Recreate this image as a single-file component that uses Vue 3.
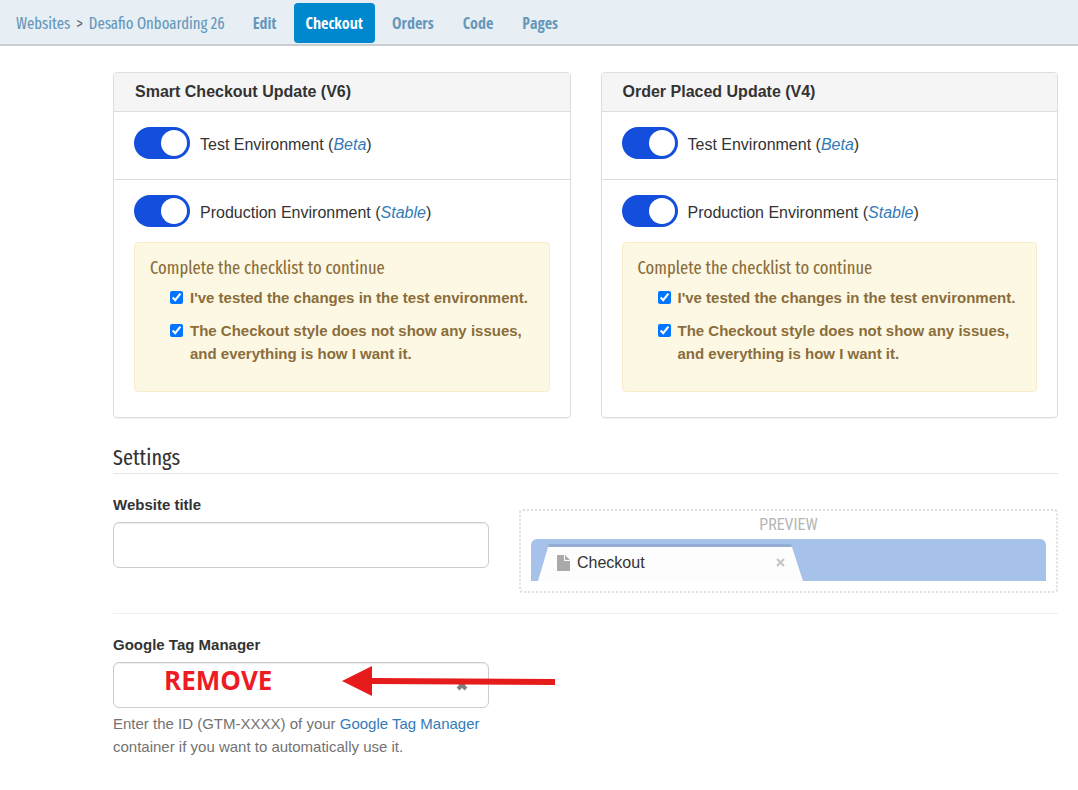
<script setup>
import { ref } from 'vue'

const tabs = ['Edit', 'Checkout', 'Orders', 'Code', 'Pages']
const activeTab = ref('Checkout')

const panels = ref([
  { id: 'smart', title: 'Smart Checkout Update (V6)', test: true, production: true, tested: true, styled: true },
  { id: 'order', title: 'Order Placed Update (V4)', test: true, production: true, tested: true, styled: true }
])

const title = ref('')
const gtm = ref('')
</script>

<template>
  <div class="page">
    <nav class="topbar">
      <div class="crumbs">
        <a href="#">Websites</a>
        <span class="sep">&gt;</span>
        <a href="#">Desafio Onboarding 26</a>
      </div>
      <div class="tabs">
        <a
          v-for="tab in tabs"
          :key="tab"
          href="#"
          class="tab"
          :class="{ active: tab === activeTab }"
          @click.prevent="activeTab = tab"
        >{{ tab }}</a>
      </div>
    </nav>

    <main class="content">
      <div class="panels">
        <section v-for="panel in panels" :key="panel.id" class="panel">
          <h3 class="panel-title">{{ panel.title }}</h3>
          <div class="row">
            <div class="env">
              <input :id="panel.id + '-test'" v-model="panel.test" type="checkbox" class="switch" />
              <label :for="panel.id + '-test'">Test Environment (<em>Beta</em>)</label>
            </div>
          </div>
          <div class="row">
            <div class="env">
              <input :id="panel.id + '-prod'" v-model="panel.production" type="checkbox" class="switch" />
              <label :for="panel.id + '-prod'">Production Environment (<em>Stable</em>)</label>
            </div>
            <div class="checklist">
              <h4>Complete the checklist to continue</h4>
              <label class="check">
                <input v-model="panel.tested" type="checkbox" />
                <span>I've tested the changes in the test environment.</span>
              </label>
              <label class="check">
                <input v-model="panel.styled" type="checkbox" />
                <span>The Checkout style does not show any issues, and everything is how I want it.</span>
              </label>
            </div>
          </div>
        </section>
      </div>

      <h2 class="section-title">Settings</h2>

      <div class="settings">
        <div class="field">
          <label for="title">Website title</label>
          <input id="title" v-model="title" type="text" class="text-input" />
        </div>
        <div class="preview">
          <div class="preview-label">PREVIEW</div>
          <div class="browser">
            <div class="browser-tab">
              <svg class="file" width="13" height="16" viewBox="0 0 13 16" aria-hidden="true">
                <path d="M0 0h7v6h6v10H0z" fill="#aaa" />
                <path d="M8 0l5 5H8z" fill="#aaa" />
              </svg>
              <span class="browser-title">Checkout</span>
              <svg class="close" width="9" height="9" viewBox="0 0 9 9" aria-hidden="true">
                <path d="M1 1l7 7M8 1l-7 7" stroke="#c4c4c4" stroke-width="2" />
              </svg>
            </div>
          </div>
        </div>
      </div>

      <hr class="divider" />

      <div class="settings">
        <div class="field">
          <label for="gtm">Google Tag Manager</label>
          <div class="gtm">
            <input id="gtm" v-model="gtm" type="text" class="text-input" />
            <button type="button" class="clear" aria-label="Clear" @click="gtm = ''">
              <svg width="14" height="14" viewBox="0 0 14 14">
                <path d="M3 3l8 8M11 3L3 11" stroke="#808080" stroke-width="4" />
              </svg>
            </button>
            <span class="note">REMOVE</span>
            <svg class="arrow" width="213" height="30" viewBox="0 0 213 30" aria-hidden="true">
              <path d="M0 15L30 0v12l183 1v6l-183-1v12z" fill="#e61c1c" />
            </svg>
          </div>
          <p class="help">
            Enter the ID (GTM-XXXX) of your <a href="#">Google Tag Manager</a> container if you want to automatically use it.
          </p>
        </div>
      </div>
    </main>
  </div>
</template>

<style>
body {
  background: #fff;
}
</style>

<style scoped>
.page {
  font-family: "Liberation Sans", Arial, sans-serif;
  font-size: 15px;
  line-height: 23px;
  color: #333;
}
.page *,
.page *::before {
  box-sizing: border-box;
}
a {
  color: #337ab7;
  text-decoration: none;
}
.topbar {
  display: flex;
  align-items: center;
  gap: 16px;
  height: 46px;
  padding: 2px 0 0 16px;
  background: #e7eef4;
  border-bottom: 2px solid #c9ced3;
  font-family: "Fira Sans Extra Condensed", "Roboto Condensed", "Liberation Sans", sans-serif;
  font-size: 16px;
}
.topbar a {
  color: #6497ba;
}
.crumbs {
  display: flex;
  gap: 6px;
  white-space: nowrap;
}
.sep {
  color: #666;
}
.tabs {
  display: flex;
  gap: 5px;
}
.topbar .tab {
  padding: 0 12px;
  line-height: 40px;
  border-radius: 4px;
  font-family: "Open Sans Condensed", "Roboto Condensed", "Liberation Sans", sans-serif;
  font-weight: bold;
}
.topbar .tab.active {
  background: #0088ce;
  color: #fff;
}
.content {
  padding: 26px 20px 30px 113px;
}
.panels {
  display: grid;
  grid-template-columns: 1fr 1fr;
  gap: 30px;
}
.panel {
  border: 1px solid #ddd;
  border-radius: 4px;
  box-shadow: 0 1px 1px rgba(0, 0, 0, 0.05);
}
.panel-title {
  margin: 0;
  padding: 7px 21px 8px;
  background: #f5f5f5;
  border-radius: 3px 3px 0 0;
  font-size: 16px;
}
.row {
  padding: 15px 20px 20px;
  border-top: 1px solid #ddd;
}
.row:last-child {
  padding-bottom: 25px;
}
.env {
  display: flex;
  align-items: center;
  gap: 10px;
  font-size: 16px;
}
.env label {
  padding-top: 2px;
}
.env em {
  color: #337ab7;
}
.switch {
  appearance: none;
  width: 56px;
  height: 32px;
  margin: 0;
  padding: 3px;
  border-radius: 16px;
  background: #bbb;
}
.switch::before {
  content: "";
  display: block;
  width: 26px;
  height: 26px;
  border-radius: 50%;
  background: #fff;
}
.switch:checked {
  background: #134fdc;
}
.switch:checked::before {
  margin-left: 24px;
}
.checklist {
  margin-top: 15px;
  padding: 14px 15px 26px;
  background: #fcf8e3;
  border: 1px solid #faebcc;
  border-radius: 4px;
  color: #8a6d3b;
}
.checklist h4 {
  margin: 0 0 7px;
  font-family: "Fira Sans Extra Condensed", "Roboto Condensed", "Liberation Sans", sans-serif;
  font-size: 18px;
  font-weight: normal;
  line-height: 22px;
}
.check {
  display: flex;
  align-items: flex-start;
  gap: 7px;
  padding-left: 20px;
  font-weight: bold;
}
.check + .check {
  margin-top: 10px;
}
.check input {
  flex: none;
  width: 13px;
  height: 13px;
  margin: 5px 0 0;
  accent-color: #0075ff;
}
.section-title {
  margin: 27px 0 19px;
  padding-bottom: 2px;
  border-bottom: 1px solid #e5e5e5;
  font-family: "Fira Sans Extra Condensed", "Roboto Condensed", "Liberation Sans", sans-serif;
  font-size: 22px;
  font-weight: normal;
  line-height: 26px;
}
.settings {
  display: grid;
  grid-template-columns: 376fr 539fr;
  gap: 30px;
}
.field > label {
  display: block;
  margin-bottom: 6px;
  font-weight: bold;
}
.text-input {
  display: block;
  width: 100%;
  height: 46px;
  padding: 10px 16px;
  border: 1px solid #ccc;
  border-radius: 6px;
  background: #fff;
  box-shadow: inset 0 1px 1px rgba(0, 0, 0, 0.075);
  font: inherit;
}
.preview {
  margin-top: 16px;
  padding: 3px 10px 10px;
  border: 2px dotted #ddd;
  border-radius: 4px;
}
.preview-label {
  margin-bottom: 3px;
  color: #b5b5b5;
  font-family: "Roboto Condensed", "Liberation Sans", sans-serif;
  font-size: 16px;
  line-height: 22px;
  text-align: center;
}
.browser {
  padding: 5px 7px 0;
  background: #a6c2ea;
  border-radius: 6px 6px 0 0;
}
.browser-tab {
  display: flex;
  align-items: center;
  width: 265px;
  height: 37px;
  padding: 0 18px 0 19px;
  background: linear-gradient(#93add5 3px, #fdfdfd 3px);
  clip-path: polygon(11px 0, 253px 0, 265px 100%, 0 100%);
}
.browser-title {
  flex: 1;
  margin-left: 7px;
  font-size: 16px;
}
.divider {
  margin: 20px 0 19px;
  border: 0;
  border-top: 1px solid #eee;
}
.gtm {
  position: relative;
}
.clear {
  position: absolute;
  top: 16px;
  right: 20px;
  padding: 0;
  border: 0;
  background: none;
  line-height: 0;
}
.note {
  position: absolute;
  top: 7px;
  left: 51px;
  color: #ed1c24;
  font-family: "Open Sans", sans-serif;
  font-size: 26px;
  font-weight: bold;
  pointer-events: none;
}
.arrow {
  position: absolute;
  top: 4px;
  left: 229px;
  pointer-events: none;
}
.help {
  margin: 4px 0 0;
  color: #737373;
}
</style>
